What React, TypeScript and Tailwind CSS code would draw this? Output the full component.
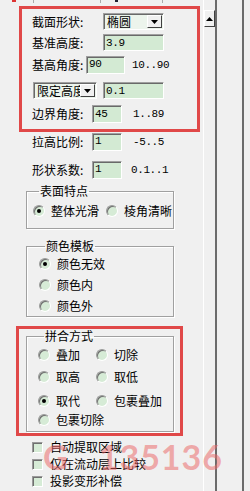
import React from 'react';

const mono = "font-['Liberation_Mono',monospace] text-[11px] tracking-[-0.4px]";

function Field({ value, className, top }: { value: string; className: string; top?: boolean }) {
  return (
    <div
      className={`flex h-full border border-t-[#a0a0a0] border-l-[#a0a0a0] border-r-white border-b-white bg-[#d3ead3] pl-[2px] shadow-[inset_1px_1px_0_#696969] ${top ? 'items-start pt-[1px]' : 'items-center'} ${className}`}
    >
      <span className={`${mono} leading-[12px]`}>{value}</span>
    </div>
  );
}

function Arrow({ up }: { up?: boolean }) {
  return (
    <svg width="7" height="4" viewBox="0 0 7 4">
      <path d={up ? 'M3.5 0 L7 4 L0 4 Z' : 'M0 0 L7 0 L3.5 4 Z'} fill="#000" />
    </svg>
  );
}

function Combo({ value, className }: { value: string; className: string }) {
  return (
    <div
      className={`flex h-full items-stretch border border-t-[#a0a0a0] border-l-[#a0a0a0] border-r-white border-b-white bg-[#ecf4ec] shadow-[inset_1px_1px_0_#696969] ${className}`}
    >
      <span className="min-w-0 flex-1 overflow-hidden pl-[3px] text-[12px] leading-[15px] whitespace-nowrap">{value}</span>
      <span className="mt-[1px] mr-[1px] mb-[1px] flex w-[15px] shrink-0 items-center justify-center border border-t-white border-l-white border-r-[#404040] border-b-[#404040] bg-[#f0f0f0]">
        <Arrow />
      </span>
    </div>
  );
}

function Radio({ checked }: { checked?: boolean }) {
  return (
    <span className="flex size-[12px] shrink-0 items-center justify-center rounded-full border border-t-[#9a9a9a] border-l-[#9a9a9a] border-r-white border-b-white bg-[#d6ebd6] shadow-[inset_1px_1px_0_#6f6f6f]">
      {checked && <span className="size-[4px] rounded-full bg-black" />}
    </span>
  );
}

function Opt({ label, checked, className = '' }: { label: string; checked?: boolean; className?: string }) {
  return (
    <div className={`flex h-[14px] items-center gap-[6px] ${className}`}>
      <Radio checked={checked} />
      <span className="text-[12px] leading-[14px] whitespace-nowrap">{label}</span>
    </div>
  );
}

function Check({ label, className = '' }: { label: string; className?: string }) {
  return (
    <div className={`flex h-[14px] items-center gap-[7px] pl-[32px] ${className}`}>
      <span className="size-[11px] shrink-0 border border-t-[#9a9a9a] border-l-[#9a9a9a] border-r-white border-b-white bg-[#d6ebd6] shadow-[inset_1px_1px_0_#6f6f6f]" />
      <span className="text-[12px] leading-[14px] whitespace-nowrap">{label}</span>
    </div>
  );
}

function Group({ title, className, children }: { title: string; className: string; children: React.ReactNode }) {
  return (
    <fieldset
      className={`border border-[#a0a0a0] shadow-[inset_1px_1px_0_#fff,1px_1px_0_#fff] ${className}`}
    >
      <legend className="ml-[6px] px-[1px] text-[12px] leading-[14px]">{title}</legend>
      {children}
    </fieldset>
  );
}

export default function App() {
  return (
    <div className="relative flex h-[491px] w-[250px] overflow-hidden bg-[#f0f0f0] font-['Noto_Sans_CJK_SC',sans-serif] text-black">
      {/* property panel */}
      <div className="w-[203px] shrink-0">
        <div className="relative h-[3px]">
          <span className="absolute top-0 left-[12px] h-[2px] w-[4px] bg-[#d33]" />
          <span className="absolute top-0 left-[33px] h-[3px] w-[1px] bg-[#aaa]" />
          <span className="absolute top-0 left-[100px] h-[3px] w-[1px] bg-[#aaa]" />
          <span className="absolute top-0 left-[115px] h-[2px] w-[3px] bg-[#223]" />
          <span className="absolute top-0 left-[162px] h-[3px] w-[1px] bg-[#aaa]" />
        </div>

        <div className="mt-[3px] ml-[19px] h-[126px] w-[181px] border-[3px] border-[#e04848] pl-[10px]">
          <div className="mt-[4px] flex h-[17px] items-center">
            <span className="w-[71px] text-[12px] leading-[14px]">截面形状:</span>
            <Combo value="椭圆" className="w-[61px]" />
          </div>
          <div className="mt-[4px] flex h-[17px] items-center">
            <span className="w-[71px] text-[12px] leading-[14px]">基准高度:</span>
            <Field value="3.9" className="w-[61px]" />
          </div>
          <div className="mt-[5px] flex h-[18px] items-center">
            <span className="w-[54px] text-[12px] leading-[14px]">基高角度:</span>
            <Field value="90" top className="w-[39px]" />
            <span className={`${mono} ml-[7px]`}>10..90</span>
          </div>
          <div className="mt-[8px] ml-[1px] flex h-[17px] items-center">
            <Combo value="限定高度" className="w-[64px]" />
            <Field value="0.1" className="ml-[6px] w-[61px]" />
          </div>
          <div className="mt-[6px] flex h-[18px] items-center">
            <span className="w-[60px] text-[12px] leading-[14px]">边界角度:</span>
            <Field value="45" className="w-[30px]" />
            <span className={`${mono} ml-[11px]`}>1..89</span>
          </div>
        </div>

        <div className="mt-[1px] flex h-[18px] items-center pl-[32px]">
          <span className="w-[60px] text-[12px] leading-[14px]">拉高比例:</span>
          <Field value="1" top className="w-[30px]" />
          <span className={`${mono} ml-[11px]`}>-5..5</span>
        </div>
        <div className="mt-[10px] flex h-[18px] items-center pl-[32px]">
          <span className="w-[60px] text-[12px] leading-[14px]">形状系数:</span>
          <Field value="1" top className="w-[30px]" />
          <span className={`${mono} ml-[9px]`}>0.1..1</span>
        </div>

        <Group title="表面特点" className="mt-[5px] ml-[26px] w-[148px] pb-[10px] pl-[6px]">
          <div className="mt-[6px] flex">
            <Opt label="整体光滑" checked />
            <Opt label="棱角清晰" className="ml-[7px]" />
          </div>
        </Group>

        <Group title="颜色模板" className="mt-[10px] ml-[26px] w-[148px] pb-[3px] pl-[12px]">
          <Opt label="颜色无效" checked className="mt-[4px]" />
          <Opt label="颜色内" className="mt-[7px]" />
          <Opt label="颜色外" className="mt-[7px]" />
        </Group>

        <div className="mt-[9px] ml-[16px] h-[110px] w-[167px] border-[3px] border-[#e04848]">
          <Group title="拼合方式" className="ml-[7px] w-[148px] pb-[4px] pl-[11px]">
            <div className="mt-[5px] grid grid-cols-[58px_1fr]">
              <Opt label="叠加" />
              <Opt label="切除" />
            </div>
            <div className="mt-[8px] grid grid-cols-[58px_1fr]">
              <Opt label="取高" />
              <Opt label="取低" />
            </div>
            <div className="mt-[10px] grid grid-cols-[58px_1fr]">
              <Opt label="取代" checked />
              <Opt label="包裹叠加" />
            </div>
            <Opt label="包裹切除" className="mt-[5px]" />
          </Group>
        </div>

        <Check label="自动提取区域" className="mt-[4px]" />
        <Check label="仅在流动层上比较" className="mt-[3px]" />
        <Check label="投影变形补偿" className="mt-[3px]" />
      </div>

      {/* scrollbar */}
      <div className="flex w-[14px] shrink-0 flex-col border-l border-white border-r-2 border-r-[#6b6b6b]">
        <div className="mt-[10px] flex h-[17px] items-center justify-center border border-t-white border-l-white border-r-[#404040] border-b-[#404040] bg-[#f0f0f0]">
          <Arrow up />
        </div>
      </div>
      <div className="w-[27px] shrink-0 border-r-2 border-[#6b6b6b]" />

      {/* watermark */}
      <div className="pointer-events-none absolute top-[440px] left-[43px] font-['Lato',sans-serif] text-[34px] leading-[34px] font-bold tracking-[1px] text-[#ec6a6a]/55">
        G<span className="ml-[30px]">135136</span>
      </div>
    </div>
  );
}
